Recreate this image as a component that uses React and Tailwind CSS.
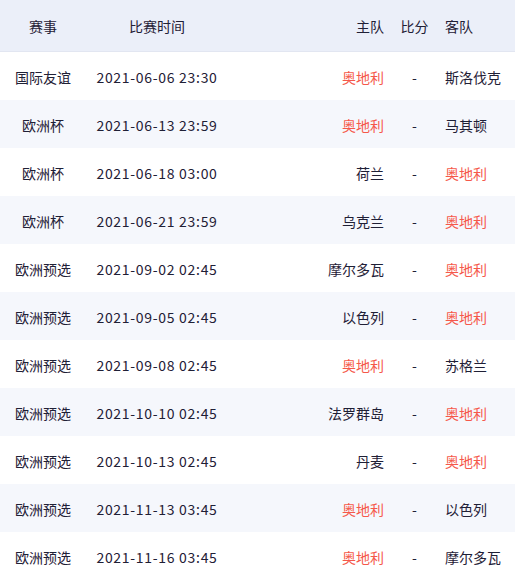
import React from "react";

const rows = [
  ["国际友谊", "2021-06-06 23:30", "奥地利", "斯洛伐克", "home"],
  ["欧洲杯", "2021-06-13 23:59", "奥地利", "马其顿", "home"],
  ["欧洲杯", "2021-06-18 03:00", "荷兰", "奥地利", "away"],
  ["欧洲杯", "2021-06-21 23:59", "乌克兰", "奥地利", "away"],
  ["欧洲预选", "2021-09-02 02:45", "摩尔多瓦", "奥地利", "away"],
  ["欧洲预选", "2021-09-05 02:45", "以色列", "奥地利", "away"],
  ["欧洲预选", "2021-09-08 02:45", "奥地利", "苏格兰", "home"],
  ["欧洲预选", "2021-10-10 02:45", "法罗群岛", "奥地利", "away"],
  ["欧洲预选", "2021-10-13 02:45", "丹麦", "奥地利", "away"],
  ["欧洲预选", "2021-11-13 03:45", "奥地利", "以色列", "home"],
  ["欧洲预选", "2021-11-16 03:45", "奥地利", "摩尔多瓦", "home"],
];

export default function App() {
  return (
    <div
      className="w-[515px] h-[580px] overflow-hidden bg-white text-[14px] text-[#1f2036]"
      style={{ fontFamily: '"Microsoft YaHei", "Noto Sans CJK SC", "Noto Sans", sans-serif' }}
    >
      <div className="flex h-[52px] items-center pt-[1px] bg-[#ebeff9] border-b border-[#e2e6f1]">
        <div className="w-[86px] text-center">赛事</div>
        <div className="w-[142px] text-center">比赛时间</div>
        <div className="w-[166px] text-right pr-[10px]">主队</div>
        <div className="w-[41px] text-center">比分</div>
        <div className="flex-1 pl-[10px]">客队</div>
      </div>
      {rows.map((r, i) => (
        <div
          key={i}
          className={`flex h-[48px] items-center pt-[2px] ${i % 2 === 1 ? "bg-[#f5f7fc]" : "bg-white"}`}
        >
          <div className="w-[86px] text-center">{r[0]}</div>
          <div className="w-[142px] text-center tracking-[0.7px]">{r[1]}</div>
          <div className={`w-[166px] text-right pr-[10px] ${r[4] === "home" ? "text-[#f5584a]" : ""}`}>{r[2]}</div>
          <div className="w-[41px] text-center">-</div>
          <div className={`flex-1 pl-[10px] ${r[4] === "away" ? "text-[#f5584a]" : ""}`}>{r[3]}</div>
        </div>
      ))}
    </div>
  );
}
